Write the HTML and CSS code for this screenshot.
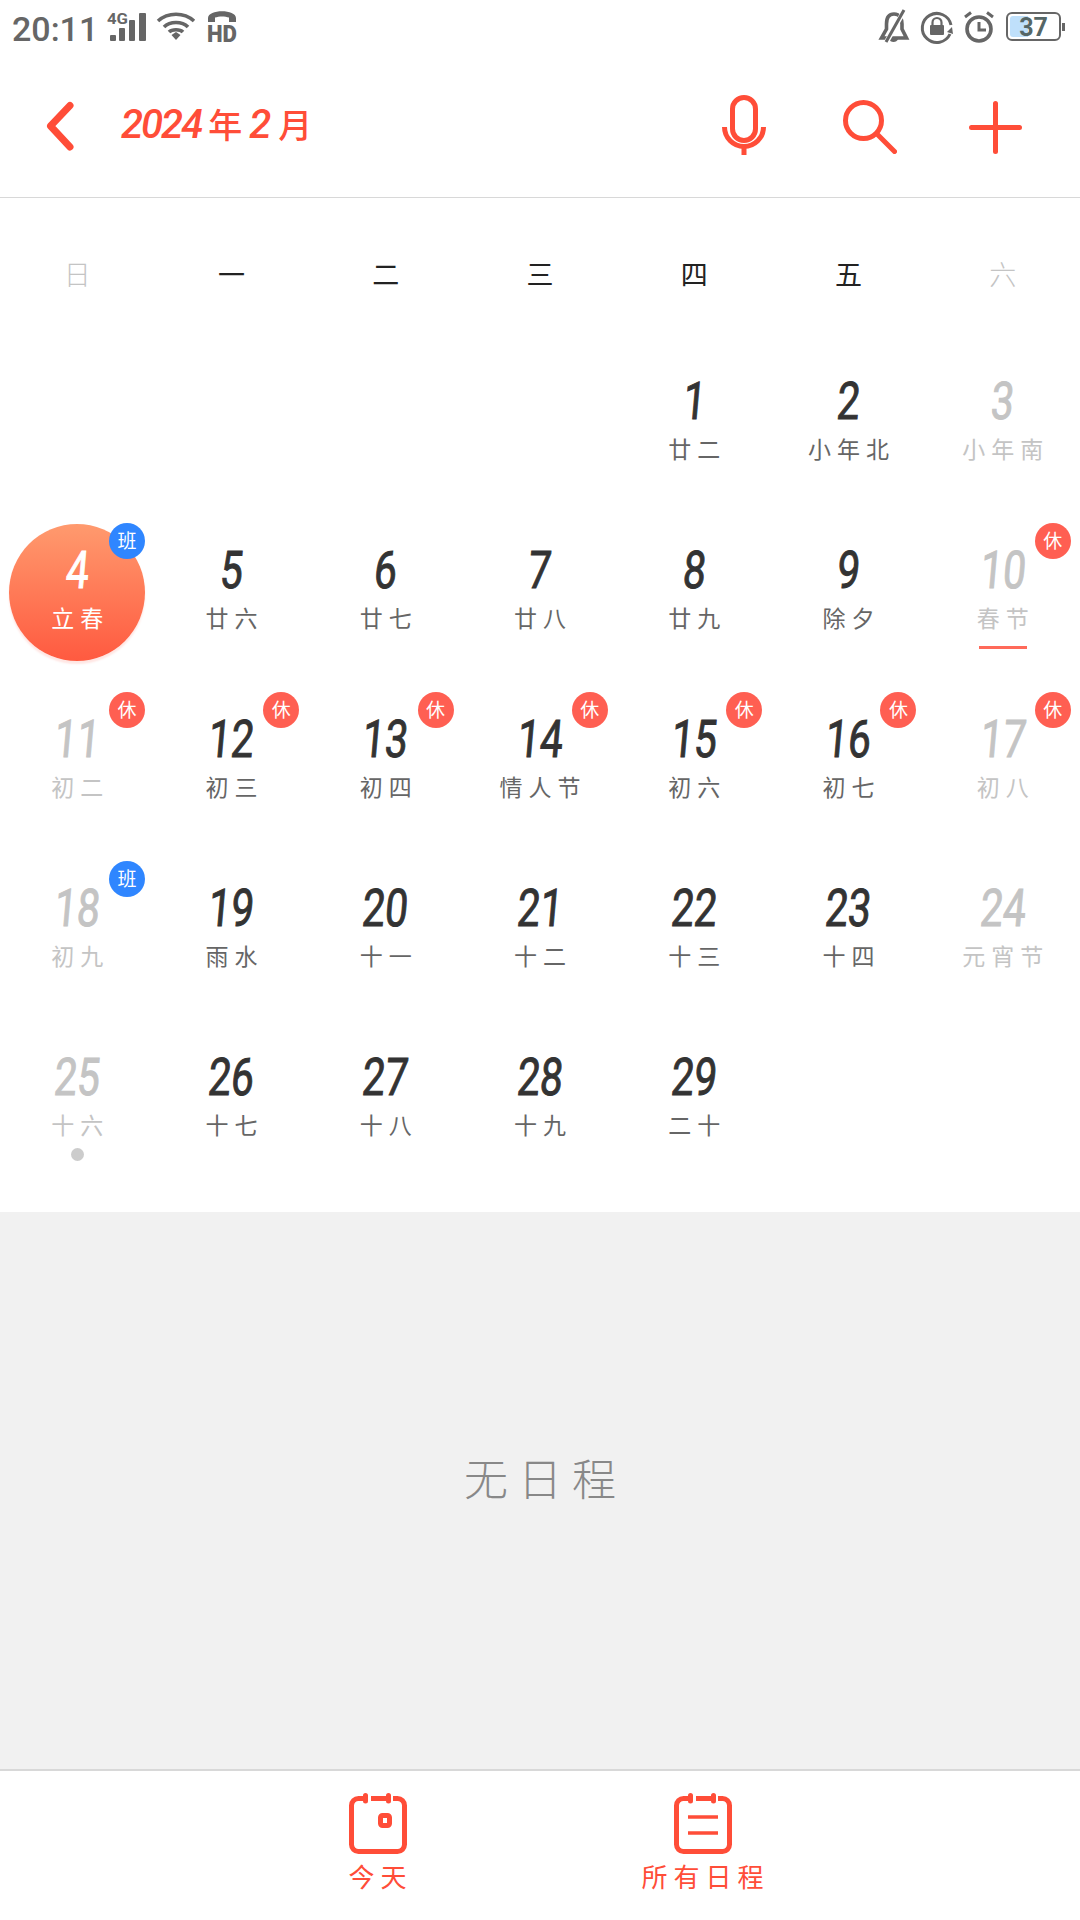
FILE: index.html
```
<!DOCTYPE html>
<html lang="zh-CN">
<head>
  <meta charset="UTF-8">
  <title>日历</title>
  <link rel="stylesheet" href="styles.css">
</head>
<body>

  <div class="status-bar">
    <div class="status-left">
      <span class="clock">20:11</span>
      <svg class="ic-signal" width="40" height="30" viewBox="0 0 40 30">
        <text x="0" y="11" class="svg-4g" textLength="21" lengthAdjust="spacingAndGlyphs">4G</text>
        <rect x="3" y="22" width="6" height="6" rx="1"/>
        <rect x="12" y="15" width="6" height="13" rx="1"/>
        <rect x="22" y="7" width="6" height="21" rx="1"/>
        <rect x="32" y="0" width="7" height="28" rx="1"/>
      </svg>
      <svg class="ic-wifi" width="40" height="28" viewBox="0 0 40 28">
        <path d="M2 9C12 0 28 0 38 9M8 15C14 9 26 9 32 15M13 20C16 17 24 17 27 20" fill="none" stroke="#666" stroke-width="3.6"/>
        <path d="M15.5 23L20 20L24.500 23L20 28Z"/>
      </svg>
      <svg class="ic-hd" width="30" height="32" viewBox="0 0 30 32">
        <path d="M1 11V7C1 -2 29 -2 29 7V11H22V6.500C18 5 12 5 8 6.500V11Z"/>
        <text x="0" y="31" class="svg-hd" textLength="30" lengthAdjust="spacingAndGlyphs">HD</text>
      </svg>
    </div>
    <div class="status-right">
      <svg class="ic-bell" width="31" height="32" viewBox="0 0 31 32">
        <path d="M15 4C9 4 7.500 9 7.500 14V19L2.500 28H27.500L23 19V14C23 9 21 4 15 4Z" fill="none" stroke="#666" stroke-width="3.600"/>
        <path d="M10 29C11 33 18 33 19 29Z"/>
        <path d="M25 1L8 31" stroke="#fff" stroke-width="5"/>
        <path d="M25 0L7 32" stroke="#666" stroke-width="3"/>
      </svg>
      <svg class="ic-lock" width="32" height="31" viewBox="0 0 32 31">
        <path d="M29 22A14.500 14.500 0 1 1 30 13" fill="none" stroke="#666" stroke-width="3"/>
        <path d="M31 15L26 20L32 22Z"/>
        <rect x="9" y="13" width="14" height="10" rx="1"/>
        <path d="M11.500 13V10.500A4.500 4.500 0 0 1 20.500 10.500V13" fill="none" stroke="#666" stroke-width="2.200"/>
      </svg>
      <svg class="ic-alarm" width="30" height="32" viewBox="0 0 30 32">
        <circle cx="15" cy="18" r="12" fill="none" stroke="#666" stroke-width="3.600"/>
        <path d="M15 11V19H22" fill="none" stroke="#666" stroke-width="3"/>
        <path d="M1 6L7 1.500M29 6L23 1.500" stroke="#666" stroke-width="3"/>
      </svg>
      <div class="battery">
        <span class="battery-fill"></span>
        <span class="battery-num">37</span>
      </div>
      <span class="battery-tip"></span>
    </div>
  </div>

  <div class="header">
    <svg class="ic-back" width="28" height="50" viewBox="0 0 28 50">
      <path d="M24 4.500L4.500 25L24 46" fill="none" stroke="#ff4d38" stroke-width="7" stroke-linecap="round" stroke-linejoin="round"/>
    </svg>
    <div class="title"><span class="title-num">2024</span>年<span class="title-num title-month">2</span>月</div>
    <svg class="ic-mic" width="44" height="62" viewBox="0 0 44 62">
      <rect x="10.500" y="2.500" width="23" height="43" rx="11.500" fill="none" stroke="#ff4d38" stroke-width="5"/>
      <path d="M2.500 32A19.500 19.500 0 0 0 41.500 32M22 52V60" fill="none" stroke="#ff4d38" stroke-width="5"/>
    </svg>
    <svg class="ic-search" width="54" height="54" viewBox="0 0 54 54">
      <circle cx="20.500" cy="20.500" r="18" fill="none" stroke="#ff4d38" stroke-width="5"/>
      <path d="M34 34L51.500 51.500" stroke="#ff4d38" stroke-width="5" stroke-linecap="round"/>
    </svg>
    <svg class="ic-plus" width="53" height="53" viewBox="0 0 53 53">
      <path d="M2.500 26.500H50.500M26.500 2.500V50.500" stroke="#ff4d38" stroke-width="5" stroke-linecap="round"/>
    </svg>
  </div>

  <div class="weekdays">
    <span class="muted">日</span><span>一</span><span>二</span><span>三</span><span>四</span><span>五</span><span class="muted">六</span>
  </div>

  <div class="month">
    <div class="day"></div>
    <div class="day"></div>
    <div class="day"></div>
    <div class="day"></div>
    <div class="day"><b>1</b><i>廿二</i></div>
    <div class="day"><b>2</b><i>小年北</i></div>
    <div class="day muted"><b>3</b><i>小年南</i></div>

    <div class="day selected"><b>4</b><i>立春</i><em class="badge work">班</em></div>
    <div class="day"><b>5</b><i>廿六</i></div>
    <div class="day"><b>6</b><i>廿七</i></div>
    <div class="day"><b>7</b><i>廿八</i></div>
    <div class="day"><b>8</b><i>廿九</i></div>
    <div class="day"><b>9</b><i>除夕</i></div>
    <div class="day muted"><b>10</b><i>春节</i><em class="badge rest">休</em><span class="underline"></span></div>

    <div class="day muted"><b>11</b><i>初二</i><em class="badge rest">休</em></div>
    <div class="day"><b>12</b><i>初三</i><em class="badge rest">休</em></div>
    <div class="day"><b>13</b><i>初四</i><em class="badge rest">休</em></div>
    <div class="day"><b>14</b><i>情人节</i><em class="badge rest">休</em></div>
    <div class="day"><b>15</b><i>初六</i><em class="badge rest">休</em></div>
    <div class="day"><b>16</b><i>初七</i><em class="badge rest">休</em></div>
    <div class="day muted"><b>17</b><i>初八</i><em class="badge rest">休</em></div>

    <div class="day muted"><b>18</b><i>初九</i><em class="badge work">班</em></div>
    <div class="day"><b>19</b><i>雨水</i></div>
    <div class="day"><b>20</b><i>十一</i></div>
    <div class="day"><b>21</b><i>十二</i></div>
    <div class="day"><b>22</b><i>十三</i></div>
    <div class="day"><b>23</b><i>十四</i></div>
    <div class="day muted"><b>24</b><i>元宵节</i></div>

    <div class="day muted"><b>25</b><i>十六</i><span class="dot"></span></div>
    <div class="day"><b>26</b><i>十七</i></div>
    <div class="day"><b>27</b><i>十八</i></div>
    <div class="day"><b>28</b><i>十九</i></div>
    <div class="day"><b>29</b><i>二十</i></div>
    <div class="day"></div>
    <div class="day"></div>
  </div>

  <div class="agenda">无日程</div>

  <div class="footer">
    <div class="tab">
      <svg width="58" height="61" viewBox="0 0 58 61">
        <path d="M14 5.500H9.500A7 7 0 0 0 2.500 12.500V51.500A7 7 0 0 0 9.500 58.500H48.500A7 7 0 0 0 55.500 51.500V12.500A7 7 0 0 0 48.500 5.500H44M22 5.500H38" fill="none" stroke="#ff4d38" stroke-width="5"/>
        <path d="M16.500 2.500V8M39.500 2.500V8" stroke="#ff4d38" stroke-width="5" stroke-linecap="round"/>
        <rect x="31.500" y="22.500" width="9" height="10" rx="2" fill="none" stroke="#ff4d38" stroke-width="5"/>
      </svg>
      <span>今天</span>
    </div>
    <div class="tab">
      <svg width="58" height="61" viewBox="0 0 58 61">
        <path d="M14 5.500H9.500A7 7 0 0 0 2.500 12.500V51.500A7 7 0 0 0 9.500 58.500H48.500A7 7 0 0 0 55.500 51.500V12.500A7 7 0 0 0 48.500 5.500H44M22 5.500H38" fill="none" stroke="#ff4d38" stroke-width="5"/>
        <path d="M16.500 2.500V8M39.500 2.500V8" stroke="#ff4d38" stroke-width="5" stroke-linecap="round"/>
        <path d="M14 24H44M14 40H44" stroke="#ff4d38" stroke-width="3.600"/>
      </svg>
      <span>所有日程</span>
    </div>
  </div>

</body>
</html>
```

FILE: styles.css
```
body {
  display: flex;
  flex-direction: column;
  width: 1080px;
  height: 1920px;
  margin: 0;
  overflow: hidden;
  background-color: #fff;
  font-family: "Noto Sans CJK SC", "Liberation Sans", sans-serif;
}

/* status bar */
.status-bar {
  display: flex;
  justify-content: space-between;
  height: 55px;
  padding: 10px 15px 0 12px;
  box-sizing: border-box;
  fill: #666;
}

.status-bar svg { overflow: visible; }

.status-left,
.status-right {
  display: flex;
  align-items: flex-start;
}

.clock {
  font-family: Roboto, sans-serif;
  font-size: 34px;
  font-weight: 500;
  line-height: 38px;
  color: #666;
}

.ic-signal { margin: 3px 0 0 9px; }
.ic-wifi { margin: 2px 0 0 9px; }
.ic-hd { margin: 1px 0 0 11px; }

.svg-4g {
  font-family: Roboto, sans-serif;
  font-size: 14px;
  font-weight: 700;
}

.svg-hd {
  font-family: Roboto, sans-serif;
  font-size: 24px;
  font-weight: 900;
}

.ic-bell { margin-top: 0; }
.ic-lock { margin: 2px 0 0 11px; }
.ic-alarm { margin: 1px 0 0 11px; }

.battery {
  position: relative;
  display: flex;
  align-items: center;
  justify-content: center;
  width: 55px;
  height: 29px;
  margin: 2px 0 0 12px;
  border: 2px solid #666;
  border-radius: 6px;
  box-sizing: border-box;
}

.battery-fill {
  position: absolute;
  left: 2px;
  top: 2px;
  bottom: 2px;
  width: 18px;
  border-radius: 3px 0 0 3px;
  background-color: #bfe0fb;
}

.battery-num {
  position: relative;
  top: 1px;
  font-family: Roboto, sans-serif;
  font-size: 25px;
  font-weight: 700;
  line-height: 25px;
  color: #566;
}

.battery-tip {
  width: 3px;
  height: 8px;
  margin: 13px 0 0 1px;
  background-color: #666;
}

/* header */
.header {
  display: flex;
  align-items: center;
  height: 142px;
  border-bottom: 1px solid #d8d8d8;
  box-sizing: content-box;
  padding-left: 46px;
}

.ic-back { margin-top: -1px; }

.title {
  flex: 1;
  margin: -6px 0 0 47px;
  font-size: 34px;
  font-weight: 500;
  color: #ff4d38;
}

.title-num {
  font-family: Roboto, sans-serif;
  font-size: 40px;
  font-style: italic;
  font-weight: 500;
  letter-spacing: -2px;
  margin-right: 7px;
}

.title-month {
  margin-left: 7px;
  letter-spacing: 0;
}

.ic-mic { margin: 0 77px 0 0; }
.ic-search { margin: 2px 72px 0 0; }
.ic-plus { margin: 2px 58px 0 0; }

/* calendar */
.weekdays {
  display: grid;
  grid-template-columns: repeat(7, 1fr);
  height: 143px;
  padding-top: 56px;
  box-sizing: border-box;
  text-align: center;
  font-size: 27px;
  font-weight: 400;
  line-height: 40px;
  color: #222;
}

.weekdays .muted {
  font-weight: 300;
  color: #c4c4c4;
}

.month {
  display: grid;
  grid-template-columns: repeat(7, 1fr);
  grid-auto-rows: 169px;
  padding-bottom: 26px;
}

.day {
  position: relative;
  display: flex;
  flex-direction: column;
  align-items: center;
  padding-top: 36px;
  box-sizing: border-box;
}

.day b {
  position: relative;
  height: 50px;
  font-family: Roboto, sans-serif;
  font-size: 52px;
  font-weight: 400;
  line-height: 50px;
  color: #333;
  -webkit-text-stroke: 1px #333;
  transform: skewX(-5deg) scaleX(0.78);
}

.day i {
  position: relative;
  margin-top: 5px;
  margin-right: -6px;
  font-size: 23px;
  font-style: normal;
  font-weight: 400;
  line-height: 32px;
  letter-spacing: 6px;
  color: #666;
}

.day.muted b {
  color: #c4c4c4;
  -webkit-text-stroke: 1px #c4c4c4;
}

.day.muted i { color: #c4c4c4; }

.day.selected::before {
  content: "";
  position: absolute;
  left: 9px;
  top: 14px;
  width: 136px;
  height: 137px;
  border-radius: 50%;
  background: linear-gradient(#ff9a6e, #ff5a40);
  box-shadow: 0 3px 2px rgba(255, 90, 64, 0.15);
}

.day.selected b {
  color: #fff;
  -webkit-text-stroke: 1px #fff;
}

.day.selected i { color: #fff; }

.badge {
  position: absolute;
  left: 109px;
  top: 13px;
  width: 36px;
  height: 36px;
  border-radius: 50%;
  font-size: 19px;
  font-style: normal;
  line-height: 34px;
  text-align: center;
  color: #fff;
}

.rest { background-color: #ff5f52; }
.work { background-color: #2f86ff; }

.underline {
  width: 48px;
  height: 3px;
  margin-top: 13px;
  background-color: #ff6a5a;
}

.dot {
  width: 13px;
  height: 13px;
  margin-top: 8px;
  border-radius: 50%;
  background-color: #ccc;
}

/* empty agenda */
.agenda {
  display: flex;
  flex: 1;
  align-items: center;
  justify-content: center;
  padding: 0 0 28px 10px;
  box-sizing: border-box;
  background-color: #f1f1f1;
  font-size: 44px;
  font-weight: 300;
  letter-spacing: 10px;
  color: #888;
}

/* footer tabs */
.footer {
  display: flex;
  justify-content: center;
  height: 151px;
  padding-top: 22px;
  border-top: 2px solid #d8d8d8;
  box-sizing: border-box;
}

.tab {
  display: flex;
  flex-direction: column;
  align-items: center;
  width: 325px;
}

.tab span {
  margin-top: 4px;
  margin-right: -6px;
  font-size: 26px;
  font-weight: 400;
  line-height: 36px;
  letter-spacing: 6px;
  color: #ff4d38;
}
```
